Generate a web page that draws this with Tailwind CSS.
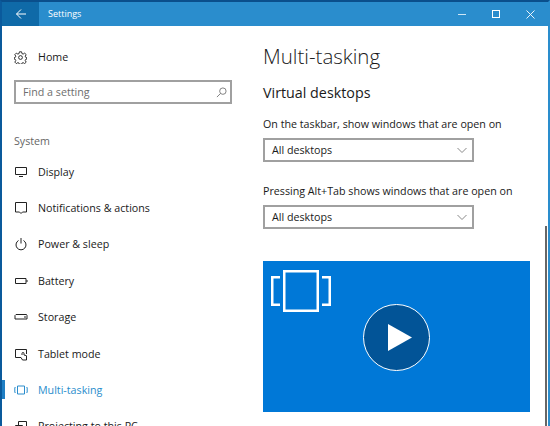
<!DOCTYPE html>
<html lang="en">
<head>
    <meta charset="UTF-8">
    <title>Settings</title>
    <script src="https://cdn.jsdelivr.net/npm/@tailwindcss/browser@4"></script>
</head>
<body class="bg-white">
<div class="w-[550px] h-[426px] overflow-hidden flex flex-col bg-white border-l-2 border-r-2 border-t-2 border-l-[#0a5a9c] border-t-[#0a4f8c] border-r-[#2a8dcd] font-['Open_Sans','Noto_Sans',sans-serif] text-[10.7px] text-[#1a1a1a]">
    <!-- Title bar -->
    <div class="h-[24px] shrink-0 flex items-center bg-[#2a8dcd] text-white">
        <div class="w-[37px] h-full flex items-center justify-center bg-[#0f6aa8]">
            <svg width="12" height="12" viewBox="0 0 12 12" fill="none" stroke="white" stroke-width="1"><path d="M11 6H1.5M6 1.5L1.5 6L6 10.5"/></svg>
        </div>
        <span class="ml-[9px] text-[9px]">Settings</span>
        <div class="ml-auto flex items-center gap-[26px] pr-[13px]">
            <div class="w-[8px] h-px bg-[#cfe6f5]"></div>
            <div class="w-[8px] h-[8px] border border-white"></div>
            <svg width="9" height="9" viewBox="0 0 9 9" stroke="white" stroke-width="0.9"><path d="M0.5 0.5L8.500 8.500M8.500 0.5L0.5 8.500"/></svg>
        </div>
    </div>

    <div class="flex flex-1 min-h-0">
        <!-- Sidebar -->
        <div class="w-[261px] shrink-0 flex flex-col">
            <div class="h-[31px] shrink-0 mt-[16px] flex items-center pl-[12px] gap-[11px]">
                <svg width="13" height="13" viewBox="0 0 24 24" fill="none" stroke="#222" stroke-width="1.7"><circle cx="12" cy="12" r="3.5"/><path d="M10 1.500h4l.7 3.300 2.200.9 2.800-1.800 2.800 2.800-1.800 2.800.9 2.200 1.900.5v2.800l-1.900.5-.9 2.200 1.800 2.800-2.800 2.800-2.800-1.800-2.200.9-.7 2.100h-4l-.7-2.100-2.200-.9-2.800 1.800-2.800-2.800 1.800-2.800-.9-2.200-1.900-.5v-2.800l1.900-.5.9-2.200-1.800-2.800 2.800-2.800 2.800 1.800 2.200-.9z"/></svg>
                <span>Home</span>
            </div>
            <div class="ml-[12px] mt-[7px] w-[218px] h-[24px] shrink-0 border-2 border-[#a0a0a0] flex items-center justify-between pl-[7px] pr-[3px] text-[#6e6e6e]">
                <span>Find a setting</span>
                <svg width="11" height="11" viewBox="0 0 12 12" fill="none" stroke="#777" stroke-width="1"><circle cx="7.500" cy="4.500" r="3.500"/><path d="M5 7L1 11"/></svg>
            </div>
            <div class="ml-[12px] mt-[30px] leading-[15px] shrink-0 text-[#666]">System</div>

            <div class="mt-[4.5px] flex flex-col shrink-0">
                <div class="h-[36.4px] flex items-center pl-[12px] gap-[10px]">
                    <svg class="shrink-0" width="14" height="14" viewBox="0 0 14 14" fill="none" stroke="#222"><path d="M1.500 2.500h11v7h-11zM5 11.500h4"/></svg>
                    <span>Display</span>
                </div>
                <div class="h-[36.4px] flex items-center pl-[12px] gap-[10px]">
                    <svg class="shrink-0" width="14" height="14" viewBox="0 0 14 14" fill="none" stroke="#222"><path d="M1.500 1.500h11v9.500H8.500L7 12.500 5.500 11h-4z"/></svg>
                    <span>Notifications &amp; actions</span>
                </div>
                <div class="h-[36.4px] flex items-center pl-[12px] gap-[10px]">
                    <svg class="shrink-0" width="14" height="14" viewBox="0 0 14 14" fill="none" stroke="#222"><path d="M4.500 3.500a5 5 0 1 0 5 0M7 1v5.500"/></svg>
                    <span>Power &amp; sleep</span>
                </div>
                <div class="h-[36.4px] flex items-center pl-[12px] gap-[10px]">
                    <svg class="shrink-0" width="14" height="14" viewBox="0 0 14 14" fill="none" stroke="#222"><path d="M1.500 4.500h10.500v5H1.500zM13 6v2"/></svg>
                    <span>Battery</span>
                </div>
                <div class="h-[36.4px] flex items-center pl-[12px] gap-[10px]">
                    <svg class="shrink-0" width="14" height="14" viewBox="0 0 14 14" fill="none" stroke="#222"><path d="M2 4.500h10.500L13 5.500v3.500H1V5.500zM10 7h2"/></svg>
                    <span>Storage</span>
                </div>
                <div class="h-[36.4px] flex items-center pl-[12px] gap-[10px]">
                    <svg class="shrink-0" width="14" height="14" viewBox="0 0 14 14" fill="none" stroke="#222"><path d="M7 10.500H1.500v-8h11V7M8 8V6.500a1 1 0 0 1 2 0V8l2.500.7V13H8.500L7 10.500"/></svg>
                    <span>Tablet mode</span>
                </div>
                <div class="relative h-[36.4px] flex items-center pl-[12px] gap-[10px] text-[#2a8dcd]">
                    <div class="absolute left-0 top-[8px] w-[3px] h-[19px] bg-[#1f7fc4]"></div>
                    <svg class="shrink-0" width="14" height="14" viewBox="0 0 14 14" fill="none" stroke="#2a8dcd"><path d="M3.500 3h7v8h-7zM1.500 4.500H.8v5h.7M12.500 4.500h.7v5h-.7"/></svg>
                    <span>Multi-tasking</span>
                </div>
                <div class="h-[36.4px] flex items-center pl-[12px] gap-[10px]">
                    <svg class="shrink-0" width="14" height="14" viewBox="0 0 14 14" fill="none" stroke="#222"><path d="M1.500 6.500h7v6h-7zM4.500 6.500v-4h8v6h-4"/></svg>
                    <span>Projecting to this PC</span>
                </div>
            </div>
        </div>

        <!-- Content -->
        <div class="flex-1 flex flex-col relative">
            <h1 class="text-[20.5px] leading-[28px] mt-[16px] shrink-0 font-light">Multi-tasking</h1>
            <h2 class="text-[14.3px] leading-[20px] mt-[13px] shrink-0">Virtual desktops</h2>
            <p class="mt-[13px] leading-[16px] shrink-0">On the taskbar, show windows that are open on</p>
            <div class="mt-[6px] w-[211px] h-[24px] shrink-0 border-2 border-[#a0a0a0] flex items-center justify-between pl-[7px] pr-[5px]">
                <span>All desktops</span>
                <svg width="10" height="7" viewBox="0 0 10 7" fill="none" stroke="#888"><path d="M.5 1L5 5.500L9.500 1"/></svg>
            </div>
            <p class="mt-[21px] leading-[16px] shrink-0">Pressing Alt+Tab shows windows that are open on</p>
            <div class="mt-[6px] w-[211px] h-[24px] shrink-0 border-2 border-[#a0a0a0] flex items-center justify-between pl-[7px] pr-[5px]">
                <span>All desktops</span>
                <svg width="10" height="7" viewBox="0 0 10 7" fill="none" stroke="#888"><path d="M.5 1L5 5.500L9.500 1"/></svg>
            </div>
            <!-- Video tile -->
            <div class="relative mt-[32px] w-[267px] h-[151px] shrink-0 bg-[#0078d7] flex items-center justify-center">
                <svg class="absolute left-[8px] top-[9px]" width="60" height="42" viewBox="0 0 60 42" fill="none" stroke="white" stroke-width="2.500"><path d="M13.250 1.250h33.500v39.500h-33.500zM9 7.250H1.250v27.500H9M51 7.250h7.750v27.500H51"/></svg>
                <div class="mt-[1px] w-[67px] h-[67px] rounded-full bg-[#025497] border border-white flex items-center justify-center">
                    <svg class="ml-[6px]" width="24" height="27" viewBox="0 0 24 27" fill="white"><path d="M0 0L24 13.500L0 27z"/></svg>
                </div>
            </div>
            <!-- Scrollbar -->
            <div class="absolute right-[1px] top-[200px] bottom-0 w-[2px] bg-[#666]"></div>
        </div>
    </div>
</div>
</body>
</html>
